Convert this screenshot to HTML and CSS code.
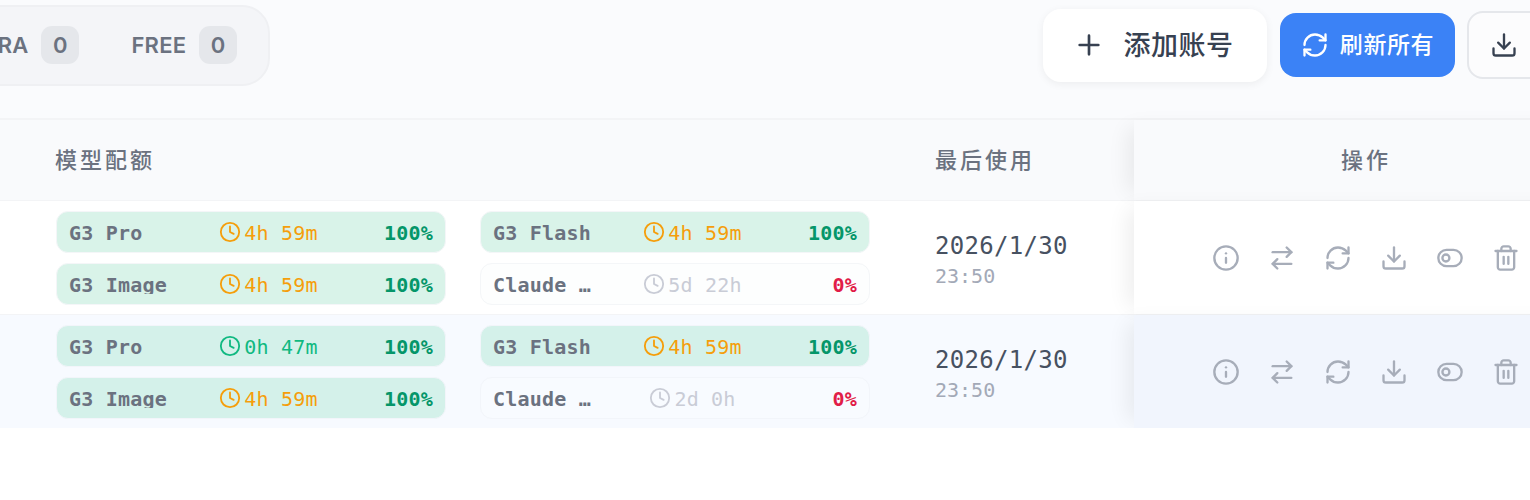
FILE: index.html
```html
<!DOCTYPE html>
<html lang="en">
  <head>
    <meta charset="UTF-8" />
    <meta name="viewport" content="width=device-width, initial-scale=1.0" />
    <title>账号管理</title>
    <link rel="stylesheet" href="styles.css">
  </head>
  <body>
    <svg class="sprite" xmlns="http://www.w3.org/2000/svg">
      <symbol id="i-plus" viewBox="0 0 24 24"><path d="M5 12h14M12 5v14" /></symbol>
      <symbol id="i-refresh" viewBox="0 0 24 24"><path d="M3 12a9 9 0 0 1 9-9 9.75 9.75 0 0 1 6.74 2.74L21 8" /><path d="M21 3v5h-5" /><path d="M21 12a9 9 0 0 1-9 9 9.75 9.75 0 0 1-6.74-2.74L3 16" /><path d="M8 16H3v5" /></symbol>
      <symbol id="i-download" viewBox="0 0 24 24"><path d="M21 15v4a2 2 0 0 1-2 2H5a2 2 0 0 1-2-2v-4" /><path d="M7 10l5 5 5-5" /><path d="M12 15V3" /></symbol>
      <symbol id="i-clock" viewBox="0 0 24 24"><circle cx="12" cy="12" r="10" /><path d="M12 6v6l4 2" /></symbol>
      <symbol id="i-info" viewBox="0 0 24 24"><circle cx="12" cy="12" r="10" /><path d="M12 16v-4" /><path d="M12 8h.01" /></symbol>
      <symbol id="i-switch" viewBox="0 0 24 24"><path d="M16 3l4 4-4 4" /><path d="M20 7H4" /><path d="M8 21l-4-4 4-4" /><path d="M4 17h16" /></symbol>
      <symbol id="i-toggle" viewBox="0 0 24 24"><rect x="2" y="5" width="20" height="14" rx="7" /><circle cx="8.5" cy="12" r="3" /></symbol>
      <symbol id="i-trash" viewBox="0 0 24 24"><path d="M3 6h18" /><path d="M19 6v14c0 1-1 2-2 2H7c-1 0-2-1-2-2V6" /><path d="M8 6V4c0-1 1-2 2-2h4c1 0 2 1 2 2v2" /><path d="M10 11v6" /><path d="M14 11v6" /></symbol>
    </svg>

    <!-- 工具栏 -->
    <div class="toolbar">
      <div class="filter-pill">
        <div class="filter-tab">ULTRA <span class="filter-count">0</span></div>
        <div class="filter-tab">FREE <span class="filter-count">0</span></div>
      </div>
      <div class="toolbar-actions">
        <button class="btn btn-add"><svg class="icon icon-plus"><use href="#i-plus" /></svg><span class="btn-label">添加账号</span></button>
        <button class="btn btn-refresh"><svg class="icon"><use href="#i-refresh" /></svg><span class="btn-label">刷新所有</span></button>
        <button class="btn btn-export"><svg class="icon"><use href="#i-download" /></svg></button>
      </div>
    </div>

    <!-- 账号表格 -->
    <div class="table">
      <div class="row row-head">
        <div class="cell-quota">模型配额</div>
        <div class="cell-used">最后使用</div>
        <div class="cell-actions">操作</div>
      </div>

      <div class="row row-body">
        <div class="cell-quota">
          <div class="quota-grid">
            <div class="chip chip-full"><span class="chip-name">G3 Pro</span><span class="chip-time amber"><svg class="icon-clock"><use href="#i-clock" /></svg>4h 59m</span><span class="chip-pct green">100%</span></div>
            <div class="chip chip-full"><span class="chip-name">G3 Flash</span><span class="chip-time amber"><svg class="icon-clock"><use href="#i-clock" /></svg>4h 59m</span><span class="chip-pct green">100%</span></div>
            <div class="chip chip-full"><span class="chip-name">G3 Image</span><span class="chip-time amber"><svg class="icon-clock"><use href="#i-clock" /></svg>4h 59m</span><span class="chip-pct green">100%</span></div>
            <div class="chip"><span class="chip-name">Claude …</span><span class="chip-time muted"><svg class="icon-clock"><use href="#i-clock" /></svg>5d 22h</span><span class="chip-pct red">0%</span></div>
          </div>
        </div>
        <div class="cell-used">
          <div class="used-date">2026/1/30</div>
          <div class="used-time">23:50</div>
        </div>
        <div class="cell-actions">
          <svg class="icon"><use href="#i-info" /></svg>
          <svg class="icon"><use href="#i-switch" /></svg>
          <svg class="icon"><use href="#i-refresh" /></svg>
          <svg class="icon"><use href="#i-download" /></svg>
          <svg class="icon"><use href="#i-toggle" /></svg>
          <svg class="icon"><use href="#i-trash" /></svg>
        </div>
      </div>

      <div class="row row-body row-current">
        <div class="cell-quota">
          <div class="quota-grid">
            <div class="chip chip-full"><span class="chip-name">G3 Pro</span><span class="chip-time teal"><svg class="icon-clock"><use href="#i-clock" /></svg>0h 47m</span><span class="chip-pct green">100%</span></div>
            <div class="chip chip-full"><span class="chip-name">G3 Flash</span><span class="chip-time amber"><svg class="icon-clock"><use href="#i-clock" /></svg>4h 59m</span><span class="chip-pct green">100%</span></div>
            <div class="chip chip-full"><span class="chip-name">G3 Image</span><span class="chip-time amber"><svg class="icon-clock"><use href="#i-clock" /></svg>4h 59m</span><span class="chip-pct green">100%</span></div>
            <div class="chip"><span class="chip-name">Claude …</span><span class="chip-time muted"><svg class="icon-clock"><use href="#i-clock" /></svg>2d 0h</span><span class="chip-pct red">0%</span></div>
          </div>
        </div>
        <div class="cell-used">
          <div class="used-date">2026/1/30</div>
          <div class="used-time">23:50</div>
        </div>
        <div class="cell-actions">
          <svg class="icon"><use href="#i-info" /></svg>
          <svg class="icon"><use href="#i-switch" /></svg>
          <svg class="icon"><use href="#i-refresh" /></svg>
          <svg class="icon"><use href="#i-download" /></svg>
          <svg class="icon"><use href="#i-toggle" /></svg>
          <svg class="icon"><use href="#i-trash" /></svg>
        </div>
      </div>
    </div>
  </body>
</html>
```

FILE: styles.css
```css
body {
  margin: 0;
  background-color: #ffffff;
  font-family: Inter, "Noto Sans CJK SC", sans-serif;
  overflow: hidden;
}

.sprite {
  display: none;
}

.icon {
  width: 28px;
  height: 28px;
  flex: none;
  fill: none;
  stroke: currentColor;
  stroke-width: 2;
  stroke-linecap: round;
  stroke-linejoin: round;
}

/* toolbar */
.toolbar {
  display: flex;
  justify-content: space-between;
  align-items: center;
  height: 90px;
  padding-bottom: 28px;
  background-color: #fafbfd;
}

.filter-pill {
  display: flex;
  align-items: center;
  gap: 52px;
  height: 81px;
  margin-left: -71px;
  padding: 0 31px 0 25px;
  box-sizing: border-box;
  background-color: #f4f5f8;
  border: 2px solid #eff0f3;
  border-radius: 28px;
}

.filter-tab {
  display: flex;
  align-items: center;
  gap: 13px;
  font-size: 22px;
  font-weight: 600;
  letter-spacing: 0.2px;
  color: #6b7280;
}

.filter-count {
  display: flex;
  align-items: center;
  justify-content: center;
  width: 38px;
  height: 38px;
  background-color: #e5e7eb;
  border-radius: 11px;
}

.toolbar-actions {
  display: flex;
  align-items: center;
  margin-right: -20px;
}

.btn {
  display: flex;
  align-items: center;
  justify-content: center;
  border: none;
  font-family: inherit;
  padding: 0;
}

.btn-label {
  margin-bottom: 4px;
}

.btn-add {
  gap: 19px;
  width: 224px;
  height: 73px;
  margin-right: 13px;
  padding-right: 4px;
  box-sizing: border-box;
  background-color: #ffffff;
  border-radius: 18px;
  box-shadow: 0 2px 8px rgba(0, 0, 0, 0.06);
  font-size: 27px;
  font-weight: 500;
  letter-spacing: 0.5px;
  color: #374151;
}

.icon-plus {
  width: 32px;
  height: 32px;
}

.btn-refresh {
  gap: 11px;
  width: 175px;
  height: 64px;
  margin-right: 12px;
  background-color: #3b82f6;
  border-radius: 16px;
  font-size: 23px;
  font-weight: 500;
  letter-spacing: 0.6px;
  color: #ffffff;
}

.btn-export {
  width: 83px;
  height: 68px;
  box-sizing: border-box;
  padding-right: 9px;
  background-color: #fcfcfd;
  border: 2px solid #e5e7eb;
  border-radius: 16px;
  color: #374151;
}

/* table */
.table {
  width: 1598px;
}

.row {
  display: grid;
  grid-template-columns: 935px 199px 464px;
}

.row-head {
  height: 80px;
  background-color: #f9fafc;
  border-top: 2px solid #f3f4f6;
  border-bottom: 1px solid #f3f4f6;
  font-size: 22px;
  font-weight: 500;
  letter-spacing: 3px;
  color: #6b7280;
}

.row-head .cell-quota {
  padding-left: 55px;
}

.row-head > div {
  display: flex;
  align-items: center;
  padding-bottom: 4px;
}

.row-head .cell-actions {
  justify-content: center;
  background-color: #f9fafc;
}

.row-body {
  border-bottom: 1px solid #f3f4f6;
  background-color: #ffffff;
}

.row-current {
  border-bottom: none;
  background-color: #f7faff;
}

.row-body > .cell-quota {
  padding: 10px 0 9px 56px;
}

.row-body > .cell-used {
  align-self: center;
  padding-top: 7px;
}

.cell-actions {
  box-shadow: -14px 0 20px -8px rgba(0, 0, 0, 0.07);
}

.row-body .cell-actions {
  display: flex;
  justify-content: center;
  align-items: center;
  gap: 28px;
  color: #a7adb9;
  background-color: #ffffff;
}

.row-current .cell-actions {
  background-color: #f1f5fd;
}

/* quota chips */
.quota-grid {
  display: grid;
  grid-template-columns: 390px 390px;
  gap: 10px 34px;
}

.chip {
  display: grid;
  grid-template-columns: 99px 1fr 64px;
  align-items: center;
  height: 42px;
  box-sizing: border-box;
  padding: 2px 12px 0;
  background-color: #fdfefe;
  border: 1px solid #f4f6f8;
  border-radius: 12px;
  font-family: "DejaVu Sans Mono", monospace;
  font-size: 20px;
  letter-spacing: 0.2px;
}

.chip-full {
  background-color: #d9f3e9;
}

.row-current .chip {
  background-color: #f8fbff;
  border-color: #f2f5fa;
}

.row-current .chip-full {
  background-color: #d4f1ea;
}

.chip-name {
  height: 18px;
  line-height: 18px;
  overflow: hidden;
  white-space: nowrap;
  font-weight: 700;
  color: #6b7280;
}

.chip-time {
  display: flex;
  align-items: center;
  justify-content: center;
  gap: 3px;
}

.icon-clock {
  width: 22px;
  height: 22px;
  margin-top: -3px;
  flex: none;
  fill: none;
  stroke: currentColor;
  stroke-width: 2;
  stroke-linecap: round;
  stroke-linejoin: round;
}

.chip-pct {
  text-align: right;
  font-weight: 700;
}

.amber { color: #f59e0b; }
.teal { color: #10b981; }
.muted { color: #c9ccd6; }
.green { color: #059669; }
.red { color: #e11d48; }

/* last used */
.used-date {
  font-family: "DejaVu Sans Mono", monospace;
  font-size: 24px;
  font-weight: 500;
  letter-spacing: 0.3px;
  line-height: 30px;
  color: #475161;
}

.used-time {
  font-family: "DejaVu Sans Mono", monospace;
  font-size: 20px;
  line-height: 30px;
  color: #a3a9b7;
}
```
